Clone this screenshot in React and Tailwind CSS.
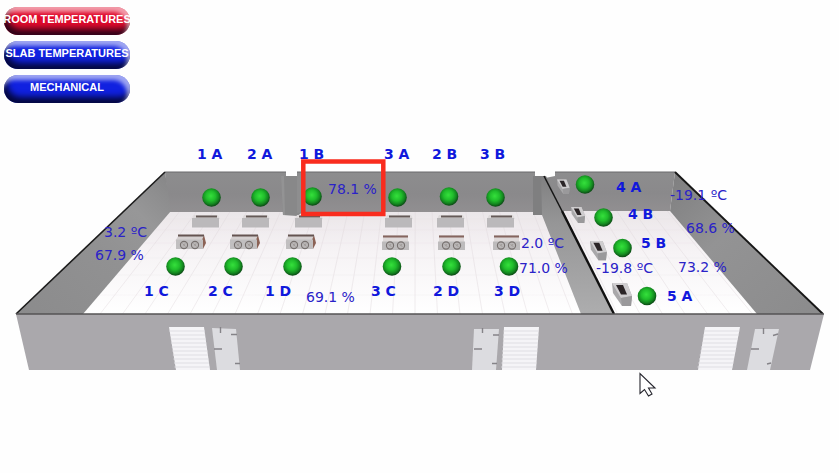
import React from "react";

const VIEW = { x: 0, y: 140, w: 839, h: 333 };

const roomLabels = [
  { text: "1 A", x: 197, y: 154 },
  { text: "2 A", x: 247, y: 154 },
  { text: "1 B", x: 299, y: 154 },
  { text: "3 A", x: 384, y: 154 },
  { text: "2 B", x: 432, y: 154 },
  { text: "3 B", x: 480, y: 154 },
  { text: "1 C", x: 144, y: 291 },
  { text: "2 C", x: 208, y: 291 },
  { text: "1 D", x: 265, y: 291 },
  { text: "3 C", x: 371, y: 291 },
  { text: "2 D", x: 433, y: 291 },
  { text: "3 D", x: 494, y: 291 },
  { text: "4 A", x: 616, y: 187 },
  { text: "4 B", x: 628, y: 214 },
  { text: "5 B", x: 641, y: 243 },
  { text: "5 A", x: 667, y: 296 },
];

const readings = [
  { text: "78.1 %", x: 328, y: 189 },
  { text: "3.2 ºC", x: 104, y: 232 },
  { text: "67.9 %", x: 95, y: 255 },
  { text: "69.1 %", x: 306, y: 297 },
  { text: "2.0 ºC", x: 521, y: 243 },
  { text: "71.0 %", x: 519, y: 268 },
  { text: "-19.8 ºC", x: 596, y: 268 },
  { text: "-19.1 ºC", x: 670, y: 195 },
  { text: "68.6 %", x: 686, y: 228 },
  { text: "73.2 %", x: 678, y: 267 },
];

const lamps = [
  [211.5, 197.5], [260.5, 197.5], [312.5, 196.5], [397.5, 197.5], [449, 196.5], [495.5, 197.5],
  [175.5, 266.5], [233.5, 266.5], [292.5, 266.5], [392, 266.5], [451.5, 266.5], [509, 266.5],
  [585, 184.5], [603.5, 217.5], [622.5, 248], [647, 296],
];

const backUnits = [192, 242, 295, 385, 437, 487];
const leftFanUnits = [176, 230, 286];
const rightFanUnits = [382, 438, 493];
const sideUnits = [
  [557, 179.5, 0.63], [571, 207, 0.7], [590, 241, 0.84], [612, 283, 1],
];

const tileLines = Array.from({ length: 30 }, (_, i) => i);

function place({ x, y }) {
  return {
    left: `${((x - VIEW.x) / VIEW.w) * 100}%`,
    top: `${((y - VIEW.y) / VIEW.h) * 100}%`,
  };
}

function Fan({ cx, cy }) {
  return (
    <g fill="none">
      <circle cx={cx} cy={cy} r="3.6" fill="#b9b6b6" stroke="#77716f" strokeWidth="1.1" />
      <path d={`M${cx - 1.5} ${cy - 1.5}l3 3M${cx + 1} ${cy - 1.5}l-1.5 2`} stroke="#9a9593" strokeWidth="0.8" />
    </g>
  );
}

function Shutter({ points, x1, x2, slant }) {
  return (
    <g>
      <polygon points={points} fill="#f5f4f7" />
      {[331, 335, 339, 343, 347, 351, 355, 359, 363, 367].map((y) => {
        const dx = ((y - 327) / 43) * slant;
        return <line key={y} x1={x1 + dx} x2={x2 + dx} y1={y} y2={y} stroke="#dfdee3" strokeWidth="1" />;
      })}
    </g>
  );
}

function Building() {
  return (
    <svg viewBox="0 140 839 333" className="block h-auto w-full" aria-hidden="true">
      <defs>
        <radialGradient id="lamp" cx="0.46" cy="0.42" r="0.58">
          <stop offset="0" stopColor="#35e03c" />
          <stop offset="0.45" stopColor="#20bd2b" />
          <stop offset="0.75" stopColor="#148820" />
          <stop offset="1" stopColor="#0b4514" />
        </radialGradient>
        <linearGradient id="floor" x1="0" y1="0" x2="0" y2="1">
          <stop offset="0" stopColor="#ebe6e9" />
          <stop offset="0.4" stopColor="#f6f3f5" />
          <stop offset="1" stopColor="#ffffff" />
        </linearGradient>
        <linearGradient id="back" x1="0" y1="0" x2="0" y2="1">
          <stop offset="0" stopColor="#8d8d8e" />
          <stop offset="0.55" stopColor="#8a898b" />
          <stop offset="1" stopColor="#918f91" />
        </linearGradient>
        <linearGradient id="leftWall" x1="0" y1="1" x2="1" y2="0">
          <stop offset="0" stopColor="#8b8b8c" />
          <stop offset="0.5" stopColor="#919192" />
          <stop offset="0.75" stopColor="#979798" />
          <stop offset="1" stopColor="#858586" />
        </linearGradient>
        <linearGradient id="rightWall" x1="0" y1="0" x2="1" y2="1">
          <stop offset="0" stopColor="#7e7e7f" />
          <stop offset="0.4" stopColor="#939394" />
          <stop offset="1" stopColor="#8b8b8c" />
        </linearGradient>
        <linearGradient id="divider" x1="0" y1="0" x2="0" y2="1">
          <stop offset="0" stopColor="#808081" />
          <stop offset="0.35" stopColor="#969697" />
          <stop offset="1" stopColor="#adadae" />
        </linearGradient>
        <clipPath id="floorClip">
          <polygon points="171,211 670,211 757,314 83,314" />
        </clipPath>
      </defs>

      <polygon points="171,211 670,211 757,314 83,314" fill="url(#floor)" />
      <g clipPath="url(#floorClip)" stroke="#dbd3d7" strokeWidth="0.7" opacity="0.55">
        {tileLines.map((i) => (
          <line key={i} x1={180 + i * 16.8} y1="211" x2={100 + i * 22.5} y2="314" />
        ))}
        <g opacity="0.3">
          <line x1="80" x2="760" y1="219" y2="219" />
          <line x1="80" x2="760" y1="230" y2="230" />
          <line x1="80" x2="760" y1="243" y2="243" />
          <line x1="80" x2="760" y1="258" y2="258" />
          <line x1="80" x2="760" y1="275" y2="275" />
          <line x1="80" x2="760" y1="295" y2="295" />
        </g>
      </g>

      <polygon points="165,172 286,172 286,176 297,176 297,172 535,172 535,212 169,212" fill="url(#back)" />
      <polygon points="281,176 303,176 303,212 297,216 283,215" fill="#888889" />
      <polygon points="281,176 284,176 285,215 283,215" fill="#939394" />
      <polygon points="297,176 303,173 303,212 297,213" fill="#8e8e8f" />
      <path d="M165 172H286M297 172H535" stroke="#6b6b6c" strokeWidth="1" />
      <polygon points="165,172 171,211 83,314 16,314" fill="url(#leftWall)" />
      <path d="M165 172L16 314" stroke="#1c1c1c" strokeWidth="1.6" />

      <polygon points="555,172 675,172 670,211 562,211 545,178 555,176" fill="url(#back)" />
      <polygon points="533,176 546,176 614,314 581,314 542,215 533,215" fill="url(#divider)" />
      <polygon points="533,176 541,176 542,215 533,215" fill="#7f7f80" />
      <path d="M555 172H675" stroke="#6b6b6c" strokeWidth="1" />
      <path d="M544 176L562 211" stroke="#151515" strokeWidth="1.5" />
      <path d="M562 211L614 314" stroke="#101010" strokeWidth="2.4" />
      <polygon points="675,172 823,314 757,314 670,211" fill="url(#rightWall)" />
      <path d="M675 172L823 314" stroke="#171717" strokeWidth="1.9" />

      <polygon points="16,314 824,314 810,370 29,370" fill="#aaa8ac" />
      <path d="M16 314H824" stroke="#555355" strokeWidth="1.6" />

      <Shutter points="169,327 204,327 210,370 176,370" x1={169} x2={204} slant={6} />
      <Shutter points="504,327 539,327 536,370 502,370" x1={504} x2={539} slant={-3} />
      <Shutter points="705,327 740,327 732,370 698,370" x1={705} x2={740} slant={-8} />
      <g fill="#dcdce0">
        <polygon points="212,328 236,329 240,370 217,370" />
        <polygon points="474,329 499,329 496,370 472,370" />
        <polygon points="755,329 779,329 770,370 747,370" />
      </g>
      <g stroke="#858388" strokeWidth="1.4" fill="none">
        <path d="M220.500 327V333M231 334.500H237M214 349H222M235 363.500H240" />
        <path d="M482.500 328V333M493 335H499M474 349H482M492 363.500H497" />
        <path d="M763.500 328V334M773 335.500L778 334M751 349H759M767 364L771 363" />
      </g>

      {backUnits.map((x) => (
        <g key={x}>
          <polygon points={`${x + 2},215 ${x + 26},215 ${x + 28},219 ${x},219`} fill="#dedadb" />
          <rect x={x} y="218" width="27" height="9.500" fill="#bbb9bb" />
          <rect x={x + 4} y="215.500" width="21" height="2" fill="#655a58" />
        </g>
      ))}

      {leftFanUnits.map((x) => (
        <g key={x}>
          <polygon points={`${x + 3},235 ${x + 28},235 ${x + 27},240 ${x},240`} fill="#d5d0d0" />
          <polygon points={`${x + 28},235 ${x + 30},243 ${x + 27},249 ${x + 26},240`} fill="#8b6255" />
          <rect x={x} y="239.500" width="27" height="9.500" fill="#c1bfc0" />
          <rect x={x + 2} y="234.500" width="26" height="2" fill="#655451" />
          <Fan cx={x + 8} cy={245} />
          <Fan cx={x + 19} cy={245} />
        </g>
      ))}

      {rightFanUnits.map((x) => (
        <g key={x}>
          <rect x={x + 1} y="235" width="25" height="7" fill="#ddd8d8" />
          <rect x={x} y="241.500" width="27" height="8.500" fill="#bdbbbc" />
          <rect x={x + 1} y="235.500" width="25" height="2" fill="#85655e" />
          <Fan cx={x + 8} cy={245.5} />
          <Fan cx={x + 19} cy={245.5} />
        </g>
      ))}

      {sideUnits.map(([x, y, s]) => (
        <g key={x} transform={`translate(${x} ${y}) scale(${s})`}>
          <polygon points="0,0 15,0 20,13 19,23 10,23 1,10" fill="#a9a8aa" />
          <polygon points="0,0 15,0 20,13 9,15" fill="#cfcdcf" />
          <polygon points="9,15 20,13 19,23 10,23" fill="#9a999b" />
          <polygon points="4,2 11,2 15,11.500 9,11.500" fill="#2b2527" />
        </g>
      ))}

      {lamps.map(([cx, cy]) => (
        <circle key={`${cx}-${cy}`} cx={cx} cy={cy} r="9.300" fill="url(#lamp)" />
      ))}

      <rect x="303.300" y="161.500" width="80" height="52.500" fill="none" stroke="#f92c1e" strokeWidth="4.500" />

      <path
        d="M640 373.500V393.500L644.500 389.500L648.500 396L652 394L648.500 388H655Z"
        fill="#ffffff"
        stroke="#25252d"
        strokeWidth="1.100"
      />
    </svg>
  );
}

const pill =
  "flex h-7 w-full items-start justify-center rounded-full pt-1 text-[11px] leading-4 font-bold whitespace-nowrap text-white";
const bevel =
  "shadow-[inset_-3px_5px_4px_rgba(255,255,255,0.6),inset_3px_-6px_6px_rgba(0,0,20,0.8)]";

export default function App() {
  return (
    <main className="bg-[#fefefe]">
      <nav className="flex w-[134px] flex-col gap-1.5 px-1 pt-[7px] pb-[37px] font-['Liberation_Sans',Arial,sans-serif]">
        <button type="button" className={`${pill} ${bevel} bg-[#e00a2c]`}>ROOM TEMPERATURES</button>
        <button type="button" className={`${pill} ${bevel} bg-[#1021e0]`}>SLAB TEMPERATURES</button>
        <button type="button" className={`${pill} ${bevel} bg-[#1021e0]`}>MECHANICAL</button>
      </nav>

      <section
        aria-label="Room temperatures"
        className="relative font-['DejaVu_Sans',Verdana,sans-serif] text-sm leading-4 whitespace-nowrap"
      >
        <Building />
        {roomLabels.map((item) => (
          <span
            key={item.text}
            className="absolute -translate-y-1/2 font-bold text-[#1018dc]"
            style={place(item)}
          >
            {item.text}
          </span>
        ))}
        {readings.map((item) => (
          <span
            key={item.text}
            className="absolute -translate-y-1/2 text-[#2a22c8]"
            style={place(item)}
          >
            {item.text}
          </span>
        ))}
      </section>
    </main>
  );
}
